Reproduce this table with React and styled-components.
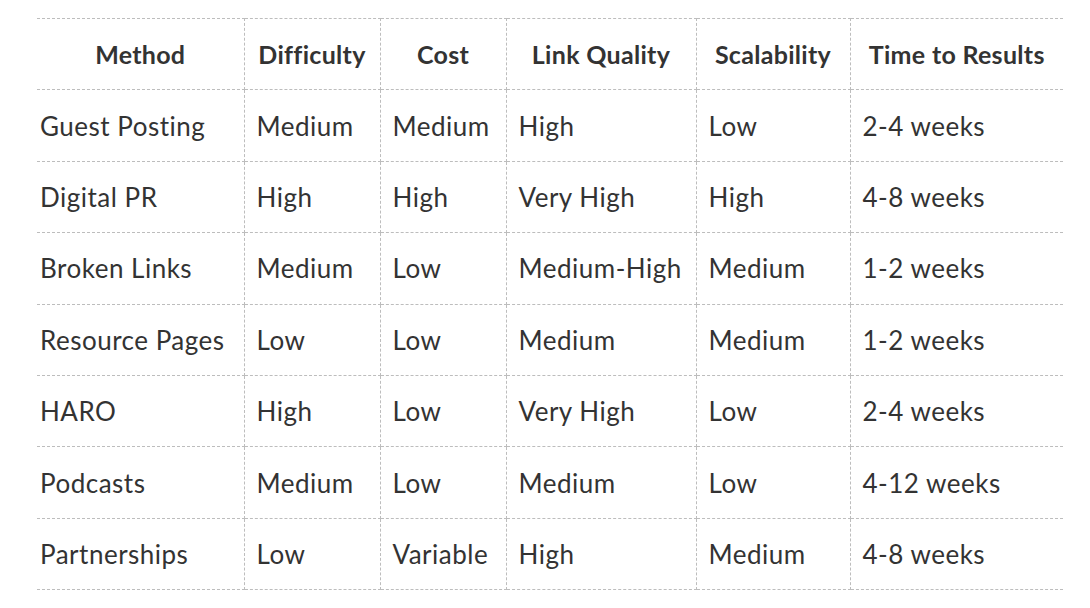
import React from "react";
import styled, { createGlobalStyle } from "styled-components";

const GlobalStyle = createGlobalStyle`
  body {
    margin: 0;
    background: #ffffff;
    font-family: "Lato", "Open Sans", sans-serif;
    font-variant-ligatures: none;
    color: #333333;
  }
`;

const Page = styled.div`
  padding: 18px 27px 0 37px;
`;

const Table = styled.table`
  width: 1026px;
  border-collapse: collapse;
  table-layout: fixed;
`;

const HeadCell = styled.th`
  height: 70.4px;
  padding: 0 2px;
  font-size: 25px;
  font-weight: 700;
  letter-spacing: 0.3px;
  text-align: center;
  color: #333333;
  border: 1px dashed #bdbdbd;
  white-space: nowrap;

  &:first-child {
    border-left: none;
  }
  &:last-child {
    border-right: none;
  }
`;

const Cell = styled.td`
  height: 70.4px;
  padding: 0 0 0 12px;
  font-size: 26px;
  font-weight: 400;
  letter-spacing: 0.5px;
  text-align: left;
  color: #333333;
  border: 1px dashed #bdbdbd;
  white-space: nowrap;

  &:first-child {
    border-left: none;
    padding-left: 3px;
  }
  &:last-child {
    border-right: none;
  }
`;

const columns = [
  { title: "Method", width: 207 },
  { title: "Difficulty", width: 136 },
  { title: "Cost", width: 126 },
  { title: "Link Quality", width: 190 },
  { title: "Scalability", width: 154 },
  { title: "Time to Results", width: 213 },
];

const rows = [
  ["Guest Posting", "Medium", "Medium", "High", "Low", "2-4 weeks"],
  ["Digital PR", "High", "High", "Very High", "High", "4-8 weeks"],
  ["Broken Links", "Medium", "Low", "Medium-High", "Medium", "1-2 weeks"],
  ["Resource Pages", "Low", "Low", "Medium", "Medium", "1-2 weeks"],
  ["HARO", "High", "Low", "Very High", "Low", "2-4 weeks"],
  ["Podcasts", "Medium", "Low", "Medium", "Low", "4-12 weeks"],
  ["Partnerships", "Low", "Variable", "High", "Medium", "4-8 weeks"],
];

const App = () => {
  return (
    <>
      <GlobalStyle />
      <Page>
        <Table>
          <colgroup>
            {columns.map((c) => (
              <col key={c.title} style={{ width: c.width }} />
            ))}
          </colgroup>
          <thead>
            <tr>
              {columns.map((c) => (
                <HeadCell key={c.title}>{c.title}</HeadCell>
              ))}
            </tr>
          </thead>
          <tbody>
            {rows.map((row) => (
              <tr key={row[0]}>
                {row.map((value, i) => (
                  <Cell key={i}>{value}</Cell>
                ))}
              </tr>
            ))}
          </tbody>
        </Table>
      </Page>
    </>
  );
};

export default App;
